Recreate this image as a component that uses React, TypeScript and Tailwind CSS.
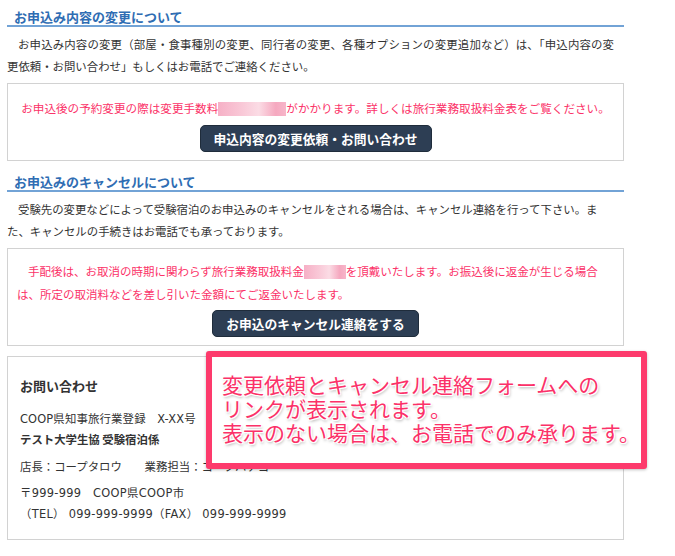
import React from "react";

const font = { fontFamily: '"Noto Sans CJK JP", "Noto Sans", sans-serif' };
const infoFont = { fontFamily: '"DejaVu Sans", "Noto Sans CJK JP", sans-serif' };

function Blur({ w }: { w: number }) {
  return (
    <span
      className="inline-block h-[14px] align-[-3px] bg-[linear-gradient(90deg,#f6b0c6_0%,#f9c8d7_35%,#fbdce5_60%,#f5a8bf_85%,#f7b6ca_100%)]"
      style={{ width: w }}
    />
  );
}

function Heading({ children, mt }: { children: React.ReactNode; mt: string }) {
  return (
    <div className={`${mt} border-b-2 border-[#72a3d6] pl-[7px] text-[13px] font-bold leading-[17px] text-[#2f6db3]`}>
      {children}
    </div>
  );
}

function Button({ children }: { children: React.ReactNode }) {
  return (
    <div className="flex justify-center">
      <div className="whitespace-nowrap rounded-[5px] border border-[#1f2c3b] bg-[#2d3e54] px-[13px] text-[12.75px] font-bold leading-[25px] text-white">
        {children}
      </div>
    </div>
  );
}

export default function App() {
  return (
    <div className="relative h-[556px] w-[675px] overflow-hidden bg-white text-[#333]" style={font}>
      <div className="ml-[7px] w-[617px] pt-[8px]">
        <Heading mt="mt-0">お申込み内容の変更について</Heading>
        <div className="mt-[6px] text-[11.4px] leading-[22px]">
          <div className="w-[607px] whitespace-nowrap pl-[11px] text-justify [text-align-last:justify]">
            お申込み内容の変更（部屋・食事種別の変更、同行者の変更、各種オプションの変更追加など）は、「申込内容の変
          </div>
          <div className="whitespace-nowrap">更依頼・お問い合わせ」もしくはお電話でご連絡ください。</div>
        </div>
        <div className="mt-[6px] border border-[#d2d2d2] pb-[8px] pt-[13px]">
          <p className="whitespace-nowrap text-center text-[11.6px] leading-[23px] text-[#fb3268]">
            お申込後の予約変更の際は変更手数料<Blur w={68} />がかかります。詳しくは旅行業務取扱料金表をご覧ください。
          </p>
          <div className="mt-[5px]">
            <Button>申込内容の変更依頼・お問い合わせ</Button>
          </div>
        </div>

        <Heading mt="mt-[12px]">お申込みのキャンセルについて</Heading>
        <div className="mt-[6px] text-[11.4px] leading-[22px]">
          <div className="whitespace-nowrap pl-[11px]">
            受験先の変更などによって受験宿泊のお申込みのキャンセルをされる場合は、キャンセル連絡を行って下さい。ま
          </div>
          <div className="whitespace-nowrap">た、キャンセルの手続きはお電話でも承っております。</div>
        </div>
        <div className="mt-[6px] border border-[#d2d2d2] pb-[8px] pt-[11px]">
          <div className="pl-[9px] text-[11.5px] leading-[23px] text-[#fb3268]">
            <div className="whitespace-nowrap pl-[11px]">
              手配後は、お取消の時期に関わらず旅行業務取扱料金<Blur w={42} />を頂戴いたします。お振込後に返金が生じる場合
            </div>
            <div className="whitespace-nowrap">は、所定の取消料などを差し引いた金額にてご返金いたします。</div>
          </div>
          <div className="mt-[4px]">
            <Button>お申込のキャンセル連絡をする</Button>
          </div>
        </div>

        <div className="mt-[10px] border border-[#d2d2d2] px-[12px] pb-[14px] pt-[19px] text-[11.4px]">
          <div className="text-[13px] font-bold leading-[20px]">お問い合わせ</div>
          <div className="mt-[13px] leading-[20px]" style={infoFont}>
            <div className="whitespace-nowrap tracking-[0.15px]">COOP県知事旅行業登録　X-XX号</div>
            <div className="whitespace-nowrap font-bold" style={font}>テスト大学生協 受験宿泊係</div>
          </div>
          <div className="mt-[7px] whitespace-nowrap leading-[20px]">店長：コープタロウ　　業務担当：コープハナコ</div>
          <div className="mt-[7px] leading-[21px]" style={infoFont}>
            <div className="whitespace-nowrap tracking-[0.3px]">〒999-999　COOP県COOP市</div>
            <div className="whitespace-nowrap tracking-[0.3px]">（TEL） 099-999-9999（FAX） 099-999-9999</div>
          </div>
        </div>
      </div>

      <div className="absolute left-[206px] top-[351px] h-[118px] w-[441px] rounded-[3px] border-[6px] border-[#fd3a6c] bg-white pl-[10px] pt-[15px] shadow-[0_1px_3px_rgba(0,0,0,0.25)]">
        <div
          className="whitespace-nowrap text-[21px] leading-[24px] text-[#fb3168]"
          style={{ textShadow: "0 0 2px #fff, 1px 1px 0 #fff, -1px -1px 0 #fff, 1px -1px 0 #fff, -1px 1px 0 #fff, 1px 2px 3px rgba(0,0,0,0.35)" }}
        >
          <div>変更依頼とキャンセル連絡フォームへの</div>
          <div>リンクが表示されます。</div>
          <div>表示のない場合は、お電話でのみ承ります。</div>
        </div>
      </div>
    </div>
  );
}
